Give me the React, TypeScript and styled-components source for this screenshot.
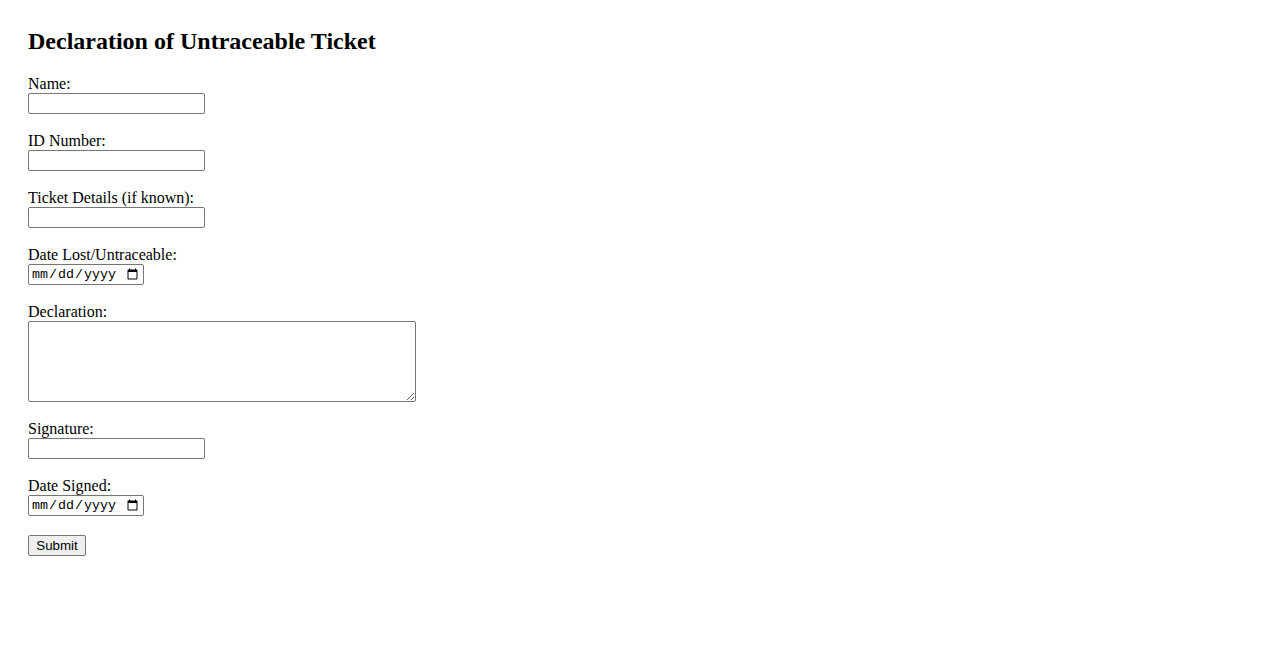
import React from "react";
import styled, { createGlobalStyle } from "styled-components";

const GlobalStyle = createGlobalStyle`
  html, body { background: #fff; }
  body {
    margin: 8px;
    font-family: "Liberation Serif", "Times New Roman", serif;
    font-size: 16px;
    color: #000;
  }
`;

const Page = styled.div`
  padding: 20px;
`;

const Title = styled.h2`
  margin: 0 0 20px;
  font-size: 24px;
  font-weight: bold;
  line-height: 27px;
`;

const Form = styled.form`
  display: block;
`;

const Field = styled.div`
  margin-bottom: 18px;
`;

const Label = styled.label`
  display: block;
  line-height: 18px;
  height: 18px;
`;

const TextInput = styled.input<{ $w?: number }>`
  display: block;
  box-sizing: border-box;
  width: ${(p) => p.$w ?? 177}px;
  height: 21px;
  margin: 0;
  padding: 1px 2px;
  border: 1px solid #767676;
  border-radius: 2px;
  font-family: "Liberation Mono", monospace;
  font-size: 13.33px;
  background: #fff;
  color: #000;
`;

const Area = styled.textarea`
  display: block;
  box-sizing: border-box;
  width: 388px;
  height: 81px;
  margin: 0;
  padding: 2px;
  border: 1px solid #767676;
  border-radius: 2px;
  font-family: "Liberation Mono", monospace;
  font-size: 13.33px;
`;

const Button = styled.button`
  display: block;
  box-sizing: border-box;
  width: 58px;
  height: 21px;
  margin: 19px 0 0;
  padding: 1px 6px;
  border: 1px solid #767676;
  border-radius: 2px;
  background: #efefef;
  font-family: "Liberation Sans", Arial, sans-serif;
  font-size: 13.33px;
  color: #000;
`;

export default function App() {
  return (
    <>
      <GlobalStyle />
      <Page>
        <Title>Declaration of Untraceable Ticket</Title>
        <Form onSubmit={(e) => e.preventDefault()}>
          <Field>
            <Label htmlFor="name">Name:</Label>
            <TextInput id="name" type="text" />
          </Field>
          <Field>
            <Label htmlFor="idn">ID Number:</Label>
            <TextInput id="idn" type="text" />
          </Field>
          <Field>
            <Label htmlFor="ticket">Ticket Details (if known):</Label>
            <TextInput id="ticket" type="text" />
          </Field>
          <Field>
            <Label htmlFor="dlost">Date Lost/Untraceable:</Label>
            <TextInput id="dlost" type="date" $w={116} />
          </Field>
          <Field>
            <Label htmlFor="decl">Declaration:</Label>
            <Area id="decl" />
          </Field>
          <Field>
            <Label htmlFor="sig">Signature:</Label>
            <TextInput id="sig" type="text" />
          </Field>
          <Field>
            <Label htmlFor="dsig">Date Signed:</Label>
            <TextInput id="dsig" type="date" $w={116} />
          </Field>
          <Button type="submit">Submit</Button>
        </Form>
      </Page>
    </>
  );
}
